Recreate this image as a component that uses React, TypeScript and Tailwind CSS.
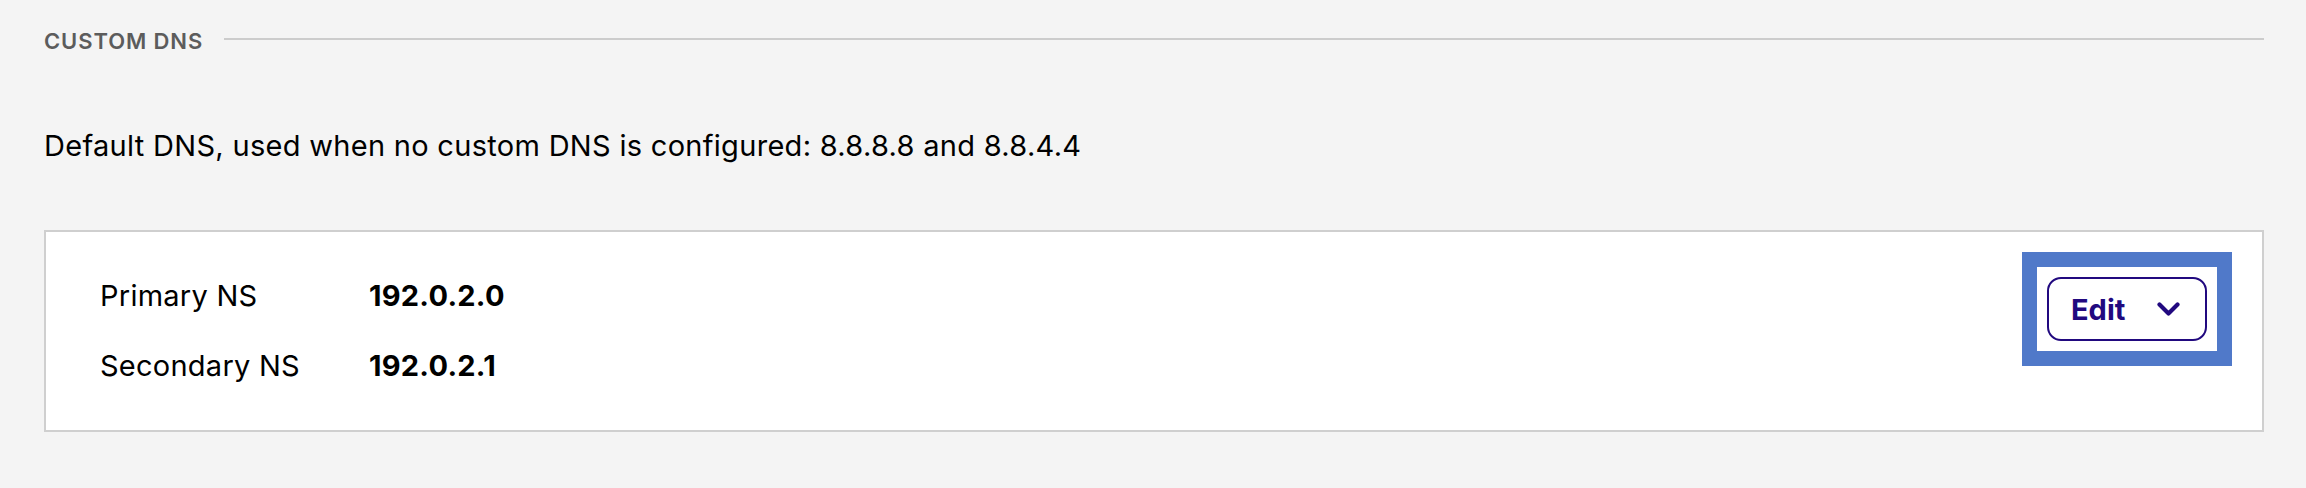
const rows = [
	{ label: "Primary NS", value: "192.0.2.0" },
	{ label: "Secondary NS", value: "192.0.2.1" },
];

const Chevron = () => (
	<svg width="23" height="15" viewBox="0 0 23 15" fill="none">
		<polyline
			points="2.5,2.5 11.5,11.5 20.5,2.5"
			stroke="currentColor"
			strokeWidth="4.2"
			strokeLinecap="round"
			strokeLinejoin="round"
		/>
	</svg>
);

const App = () => {
	return (
		<div className="min-h-screen bg-[#f4f4f4] pl-[44px] pr-[42px] pt-[24px] font-['Inter',sans-serif] text-black">
			<div className="flex items-center gap-[21px]">
				<h2 className="text-[22px] font-semibold uppercase leading-[34px] tracking-[0.9px] text-[#5c5c5c]">Custom DNS</h2>
				<div className="mb-[4px] h-[2px] flex-1 bg-[#cccccc]" />
			</div>

			<p className="mt-[68px] text-[29px] leading-[40px] tracking-[0.3px]">
				Default DNS, used when no custom DNS is configured: 8.8.8.8 and 8.8.4.4
			</p>

			<div className="mt-[64px] flex items-start justify-between border-2 border-[#cfcfcf] bg-white pl-[54px] pr-[45px]">
				<div className="flex flex-col gap-[30px] py-[44px]">
					{rows.map((row) => (
						<div key={row.label} className="flex text-[29px] leading-[40px] tracking-[0.25px]">
							<span className="w-[269px]">{row.label}</span>
							<span className="font-bold">{row.value}</span>
						</div>
					))}
				</div>

				<div className="mt-[35px] bg-white p-[10px] outline-[15px] outline-solid outline-[#5079c9]">
					<button
						type="button"
						className="flex h-[64px] w-[160px] items-center justify-between rounded-[14px] border-2 border-[#21097f] bg-white pl-[22px] pr-[25px] text-[29px] font-bold leading-none text-[#21097f]"
					>
						Edit
						<Chevron />
					</button>
				</div>
			</div>
		</div>
	);
};

export default App;
